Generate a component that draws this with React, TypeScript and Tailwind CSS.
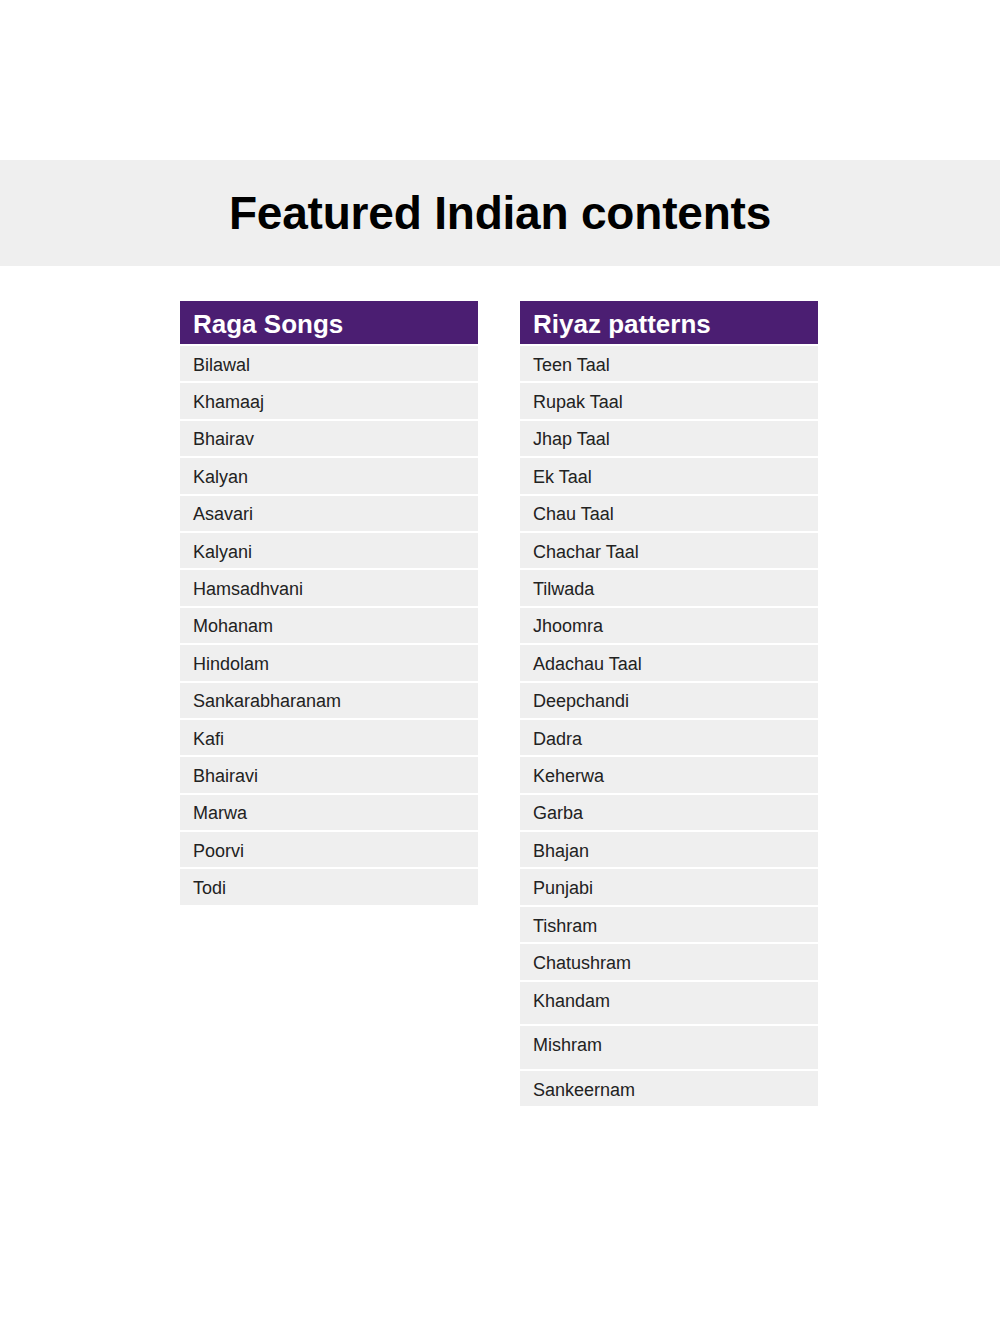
import React from 'react';

const ragas = [
  'Bilawal', 'Khamaaj', 'Bhairav', 'Kalyan', 'Asavari', 'Kalyani', 'Hamsadhvani',
  'Mohanam', 'Hindolam', 'Sankarabharanam', 'Kafi', 'Bhairavi', 'Marwa', 'Poorvi', 'Todi',
];

const riyaz = [
  'Teen Taal', 'Rupak Taal', 'Jhap Taal', 'Ek Taal', 'Chau Taal', 'Chachar Taal', 'Tilwada',
  'Jhoomra', 'Adachau Taal', 'Deepchandi', 'Dadra', 'Keherwa', 'Garba', 'Bhajan', 'Punjabi',
  'Tishram', 'Chatushram', 'Khandam', 'Mishram', 'Sankeernam',
];

const tallRows = ['Khandam', 'Mishram'];

const ListColumn: React.FC<{ title: string; items: string[] }> = ({ title, items }) => (
  <div className="w-[298px] flex flex-col gap-[2px]">
    <div className="h-[43px] bg-[#4b1e72] flex items-center px-[13px]">
      <h2 className="text-white font-bold text-[26px] leading-none pt-[2px]">{title}</h2>
    </div>
    {items.map((item) => (
      <div
        key={item}
        className={`bg-[#efefef] px-[13px] text-[18px] text-[#222] leading-none ${
          tallRows.includes(item) ? 'h-[42.6px] pt-[10px]' : 'h-[35.4px] flex items-center pt-[2px]'
        }`}
      >
        {item}
      </div>
    ))}
  </div>
);

const App: React.FC = () => {
  return (
    <div className="w-full min-h-[1320px] bg-white font-['Liberation_Sans',Arial,sans-serif]">
      <div className="h-[160px]" />
      <div className="h-[106px] bg-[#efefef] flex items-center justify-center">
        <h1 className="text-[46px] font-bold text-black leading-none tracking-[-0.2px]">
          Featured Indian contents
        </h1>
      </div>
      <div className="flex justify-center gap-[42px] pt-[35px] pr-[2px]">
        <ListColumn title="Raga Songs" items={ragas} />
        <ListColumn title="Riyaz patterns" items={riyaz} />
      </div>
    </div>
  );
};

export default App;
